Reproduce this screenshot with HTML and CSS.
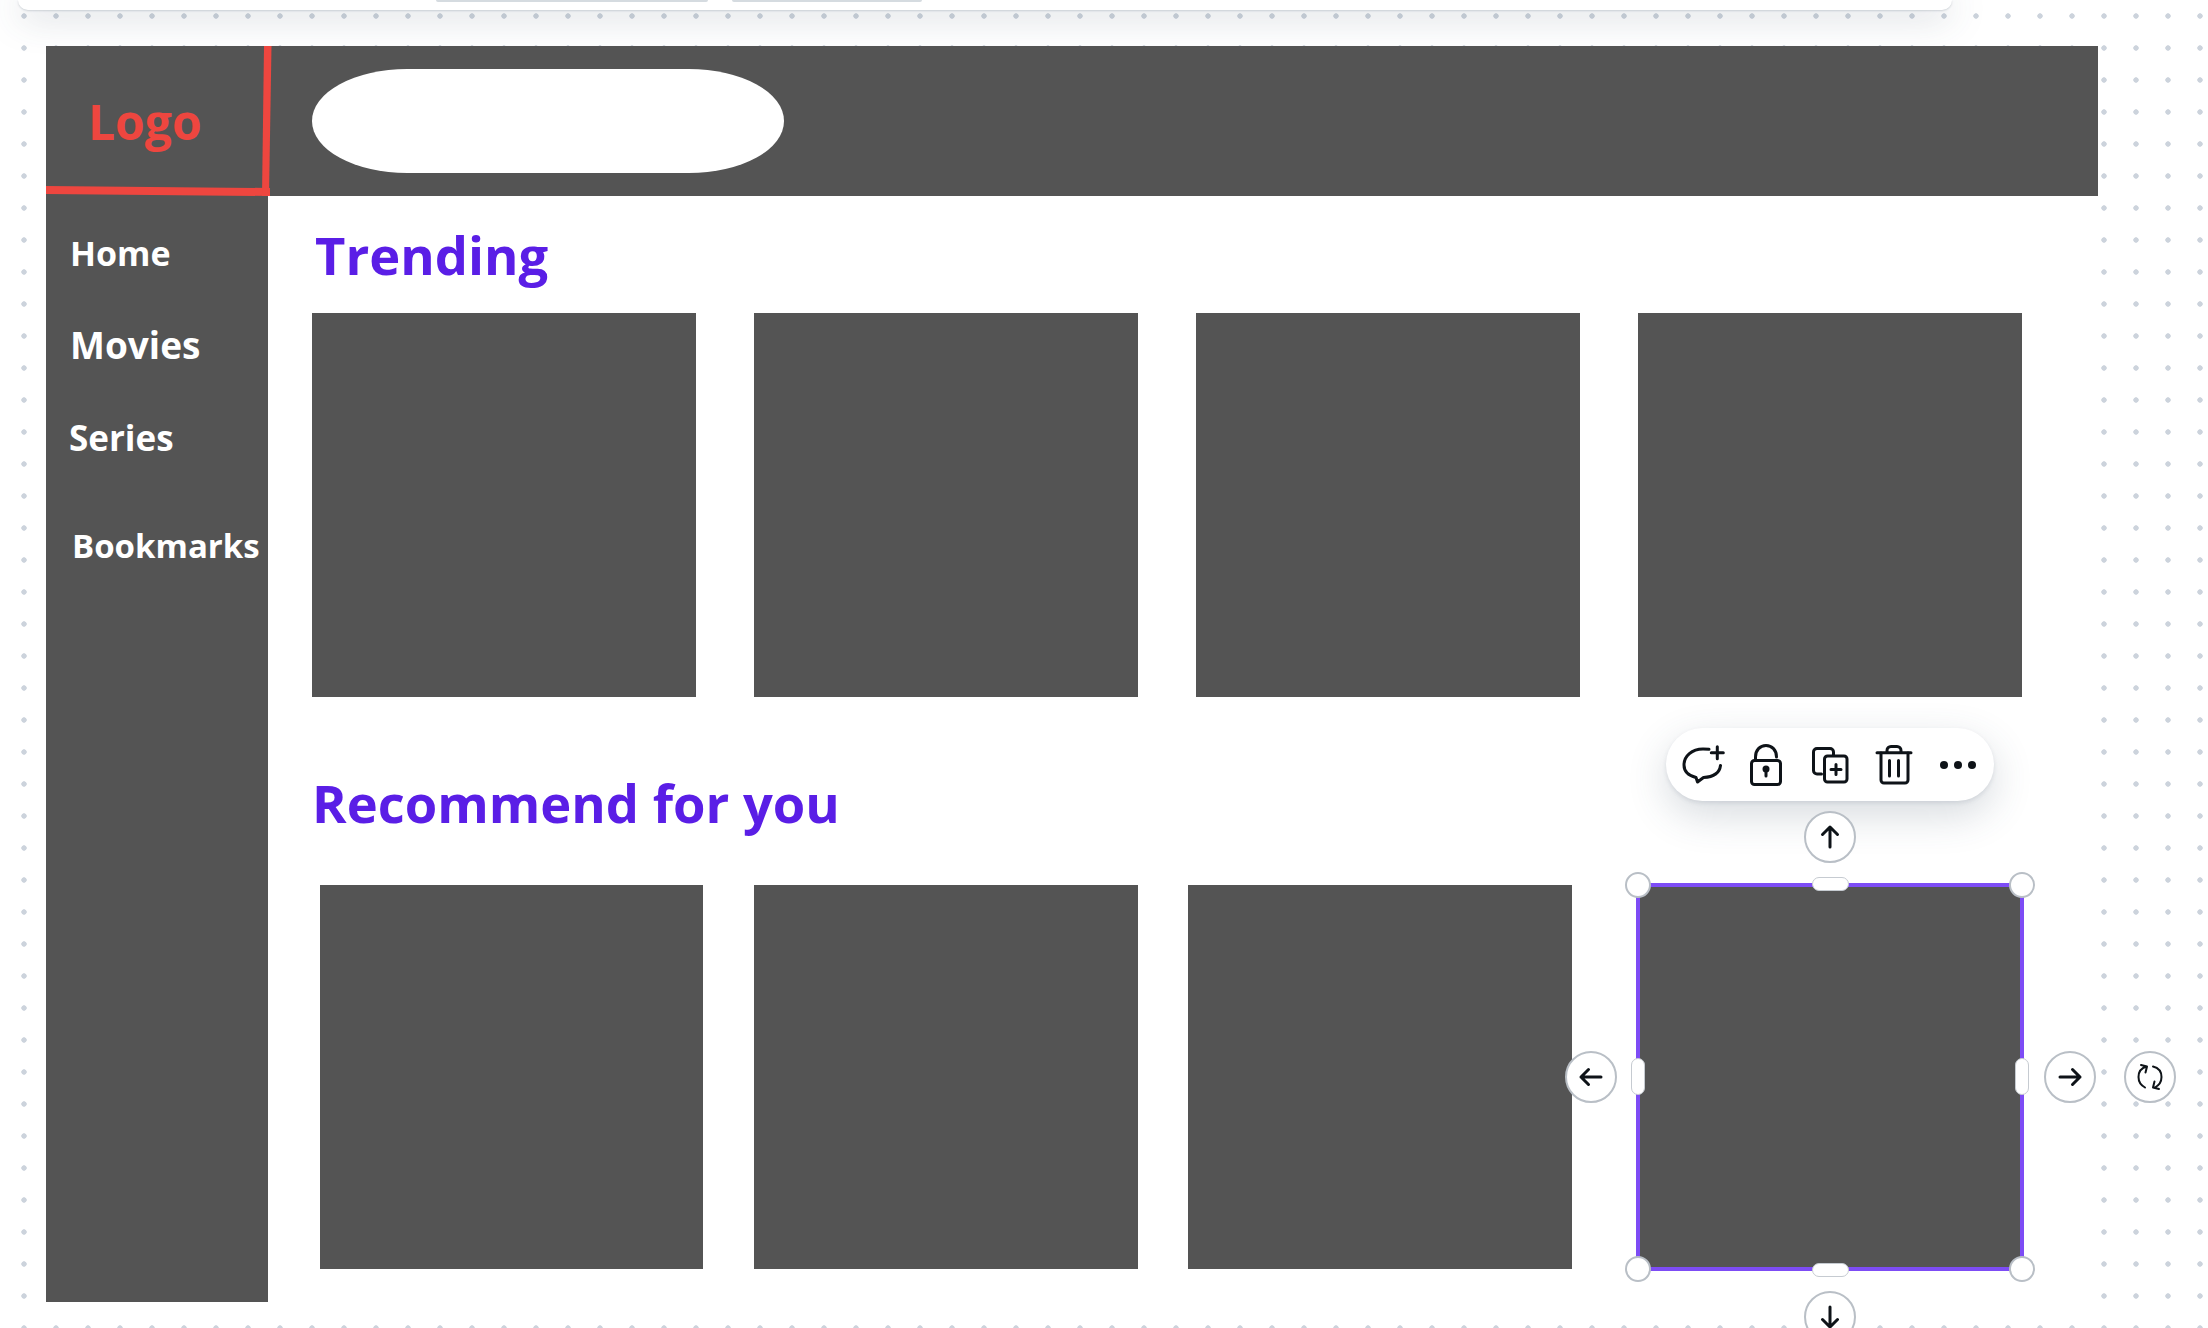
FILE: index.html
```html
<!DOCTYPE html>
<html lang="en">
<head>
  <meta charset="UTF-8" />
  <meta name="viewport" content="width=device-width, initial-scale=1.0" />
  <title>Streaming page wireframe</title>
  <link rel="stylesheet" href="styles.css">
</head>
<body>
  <div class="top-panel">
    <span class="tab tab-one"></span>
    <span class="tab tab-two"></span>
  </div>

  <div class="artboard">
    <div class="logo-cell">
      <span class="logo">Logo</span>
      <svg class="logo-lines" width="226" height="150" viewBox="0 0 226 150">
        <polygon points="0,140 224,142 224,150 0,148" fill="#ee463f" />
        <polygon points="218,0 225.500,0 223,150 216,150" fill="#ee463f" />
      </svg>
    </div>

    <header class="topbar">
      <div class="search"></div>
    </header>

    <nav class="sidebar">
      <a class="nav-home">Home</a>
      <a class="nav-movies">Movies</a>
      <a class="nav-series">Series</a>
      <a class="nav-bookmarks">Bookmarks</a>
    </nav>

    <main class="content">
      <h2 class="title-trending">Trending</h2>
      <div class="row row-trending">
        <div class="card"></div>
        <div class="card"></div>
        <div class="card"></div>
        <div class="card"></div>
      </div>

      <h2 class="title-recommend">Recommend for you</h2>
      <div class="row row-recommend">
        <div class="card"></div>
        <div class="card"></div>
        <div class="card"></div>
        <div class="card card-selected">
          <div class="toolbar">
            <svg class="tool-comment" width="40" height="42" viewBox="0 0 40 42">
              <path d="M27 5.300C25 5 23 5 21 5 10 5 2 12 2 21c0 6 4 10.500 12 12.500l1.500 4.500 6-4.500c9-.5 16-4 17-12" />
              <path d="M35.300 2.700v12M29.300 8.700h12" />
            </svg>
            <svg class="tool-lock" width="34" height="42" viewBox="0 0 34 42">
              <rect x="1.500" y="16.500" width="29" height="24" rx="3" />
              <path d="M5.500 16v-3C5.500 6 10 1.500 16 1.500S26.500 6 26.500 13" />
              <circle class="solid" cx="16" cy="25" r="3.500" />
              <path d="M16 26v6" />
            </svg>
            <svg class="tool-copy" width="36" height="36" viewBox="0 0 36 36">
              <path d="M9.500 27H5a3.500 3.500 0 0 1-3.500-3.500V5A3.500 3.500 0 0 1 5 1.500h13A3.500 3.500 0 0 1 21.500 5v3" />
              <rect x="12.500" y="9" width="22.500" height="26" rx="3" />
              <path d="M24 17.500v10M19 22.500h10" />
            </svg>
            <svg class="tool-trash" width="36" height="40" viewBox="0 0 36 40">
              <path d="M1 7.700h34M11 7.500V5.500a4 4 0 0 1 4-4h6a4 4 0 0 1 4 4v2" />
              <path d="M5 8v27a3 3 0 0 0 3 3h21a3 3 0 0 0 3-3V8" />
              <path d="M13.500 15.500V31M22.500 15.500V31" />
            </svg>
            <svg class="tool-more" width="36" height="10" viewBox="0 0 36 10">
              <circle class="solid" cx="4" cy="5" r="4" />
              <circle class="solid" cx="18" cy="5" r="4" />
              <circle class="solid" cx="32" cy="5" r="4" />
            </svg>
          </div>

          <button class="round move-up">
            <svg width="48" height="48" viewBox="0 0 48 48"><path d="M24 34V14M16.500 21.500 24 14l7.500 7.500" /></svg>
          </button>
          <button class="round move-left">
            <svg width="48" height="48" viewBox="0 0 48 48"><path d="M34 24H14M21.500 16.500 14 24l7.500 7.500" /></svg>
          </button>
          <button class="round move-right">
            <svg width="48" height="48" viewBox="0 0 48 48"><path d="M14 24h20M26.500 16.500 34 24l-7.500 7.500" /></svg>
          </button>
          <button class="round move-down">
            <svg width="48" height="48" viewBox="0 0 48 48"><path d="M24 14v20M16.500 26.500 24 34l7.500-7.500" /></svg>
          </button>
          <button class="round rotate">
            <svg width="48" height="48" viewBox="0 0 48 48">
              <path class="thin" d="M21 13.500C15 15 12.500 19 12.500 24c0 4 2 8 6.500 10.500M15 12l6 1.500-1.500 6" />
              <path class="thin" d="M27 13.500c6 1.500 8.500 5.500 8.500 10.500 0 4-2 8-6.500 10.500M33 36l-6-1.500 1.500-6" />
            </svg>
          </button>

          <span class="corner corner-tl"></span>
          <span class="corner corner-tr"></span>
          <span class="corner corner-bl"></span>
          <span class="corner corner-br"></span>
          <span class="grip grip-top"></span>
          <span class="grip grip-bottom"></span>
          <span class="grip grip-left"></span>
          <span class="grip grip-right"></span>
        </div>
      </div>
    </main>
  </div>
</body>
</html>
```

FILE: styles.css
```css
html, body {
  height: 100%;
}
body {
  margin: 0;
  overflow: hidden;
  background-color: #fff;
  background-image: radial-gradient(circle, #ccd3dc 2.4px, transparent 3px);
  background-size: 32px 32px;
  background-position: 8px 0;
  font-family: "Open Sans", sans-serif;
}

/* editor panel cut off at the top of the window */
.top-panel {
  position: relative;
  z-index: 1;
  display: flex;
  height: 10px;
  width: 1934px;
  margin-left: 18px;
  background: #fff;
  border-radius: 0 0 20px 20px;
  box-shadow: 0 1px 2px rgba(57, 76, 96, .2), 0 4px 36px rgba(57, 76, 96, .38);
}
.tab {
  height: 2px;
  background: #d5dbe0;
  border-radius: 0 0 6px 6px;
}
.tab-one {
  width: 272px;
  margin-left: 418px;
}
.tab-two {
  width: 190px;
  margin-left: 24px;
}

.artboard {
  position: relative;
  z-index: 2;
  display: grid;
  grid-template-columns: 222px 1fr;
  grid-template-rows: 150px 1106px;
  width: 2052px;
  margin: 36px 0 0 46px;
  background: #fff;
}

.logo-cell {
  position: relative;
  background: #545454;
  padding: 46px 0 0 42px;
}
.logo {
  font-size: 48px;
  font-weight: 700;
  line-height: 60px;
  color: #ee463f;
}
.logo-lines {
  position: absolute;
  left: 0;
  top: 0;
}

.topbar {
  background: #545454;
  padding: 23px 0 0 44px;
}
.search {
  width: 472px;
  height: 104px;
  background: #fff;
  border-radius: 95px / 52px;
}

.sidebar {
  display: flex;
  flex-direction: column;
  align-items: flex-start;
  background: #545454;
  color: #fff;
  font-size: 34px;
  font-weight: 700;
  line-height: 46px;
}
.nav-home {
  margin: 34px 0 0 24px;
}
.nav-movies {
  margin: 46px 0 0 24px;
  font-size: 37px;
}
.nav-series {
  margin: 47px 0 0 23px;
  font-size: 35px;
}
.nav-bookmarks {
  margin: 62px 0 0 26px;
  font-size: 33px;
}

.content {
  padding-left: 44px;
}
h2 {
  margin: 0;
  color: #5a1ee6;
  font-size: 52.500px;
  font-weight: 700;
  line-height: 68px;
}
.title-trending {
  margin: 25px 0 0 3px;
}
.title-recommend {
  margin: 72px 0 0 0;
}

.row {
  display: flex;
}
.card {
  flex: none;
  width: 384px;
  height: 383.500px;
  background: #545454;
}
.row-trending {
  gap: 58px;
  margin-top: 24px;
}
.row-trending .card {
  height: 384px;
}
.row-recommend {
  margin-top: 48px;
}
.row-recommend .card:nth-child(1) {
  margin-left: 8px;
  width: 383px;
}
.row-recommend .card:nth-child(2) {
  margin-left: 51px;
}
.row-recommend .card:nth-child(3) {
  margin-left: 50px;
}
.row-recommend .card:nth-child(4) {
  margin-left: 66px;
}

/* selection chrome on the last card */
.card-selected {
  position: relative;
  outline: 4px solid #7d4cf5;
  outline-offset: -2px;
}

.toolbar {
  position: absolute;
  left: 28px;
  top: -157px;
  display: flex;
  align-items: center;
  gap: 28px;
  width: 328px;
  height: 73px;
  box-sizing: border-box;
  padding-left: 16px;
  background: #fff;
  border-radius: 37px;
  box-shadow: 0 2px 4px rgba(57, 76, 96, .12), 0 14px 40px rgba(57, 76, 96, .2);
}
svg {
  overflow: visible;
  flex: none;
}
.toolbar path, .toolbar rect, .round path {
  fill: none;
  stroke: #0e1318;
  stroke-width: 3;
  stroke-linecap: round;
  stroke-linejoin: round;
}
.toolbar .solid {
  fill: #0e1318;
}
.round path.thin {
  stroke-width: 2;
}

.round {
  position: absolute;
  display: flex;
  align-items: center;
  justify-content: center;
  width: 52px;
  height: 52px;
  padding: 0;
  background: #fff;
  border: 2px solid #b9bfc6;
  border-radius: 50%;
}
.move-up {
  left: 166px;
  top: -74px;
}
.move-down {
  left: 166px;
  top: 406px;
}
.move-left {
  left: -73px;
  top: 166px;
}
.move-right {
  left: 406px;
  top: 166px;
}
.rotate {
  left: 486px;
  top: 166px;
}

.corner {
  position: absolute;
  width: 26px;
  height: 26px;
  box-sizing: border-box;
  background: #fff;
  border: 2px solid #b9bfc6;
  border-radius: 50%;
}
.corner-tl {
  left: -13px;
  top: -13px;
}
.corner-tr {
  right: -13px;
  top: -13px;
}
.corner-bl {
  left: -13px;
  bottom: -13px;
}
.corner-br {
  right: -13px;
  bottom: -13px;
}

.grip {
  position: absolute;
  box-sizing: border-box;
  background: #fff;
  border: 1px solid #c6cbd1;
  border-radius: 7px;
}
.grip-top, .grip-bottom {
  left: 174px;
  width: 37px;
  height: 14px;
}
.grip-top {
  top: -8px;
}
.grip-bottom {
  bottom: -8px;
}
.grip-left, .grip-right {
  top: 173px;
  width: 14px;
  height: 37px;
}
.grip-left {
  left: -7px;
}
.grip-right {
  right: -7px;
}
```
